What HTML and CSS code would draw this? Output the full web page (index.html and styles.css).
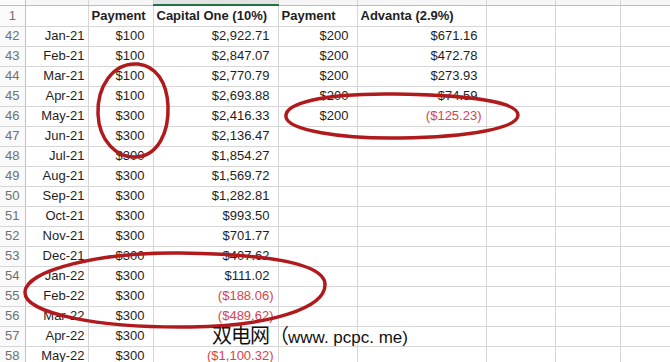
FILE: index.html
```html
<!DOCTYPE html>
<html lang="en">
<head>
  <meta charset="UTF-8" />
  <title>Payoff schedule</title>
  <link rel="stylesheet" href="styles.css">
</head>
<body>
  <div class="sheet">
    <table class="grid">
      <colgroup>
        <col class="c-rn">
        <col class="c-a">
        <col class="c-b">
        <col class="c-c">
        <col class="c-d">
        <col class="c-e">
        <col class="c-f">
        <col class="c-g">
        <col class="c-h">
      </colgroup>
      <tr class="colhead">
        <td class="rn"></td><td></td><td></td><td class="sel"></td><td></td><td></td><td></td><td></td><td></td>
      </tr>
      <tr class="head">
        <td class="rn">1</td><td></td><td>Payment</td><td>Capital One (10%)</td><td>Payment</td><td>Advanta (2.9%)</td><td></td><td></td><td></td>
      </tr>
      <tr><td class="rn">42</td><td class="date">Jan-21</td><td class="num">$100</td><td class="num">$2,922.71</td><td class="num">$200</td><td class="num">$671.16</td><td></td><td></td><td></td></tr>
      <tr><td class="rn">43</td><td class="date">Feb-21</td><td class="num">$100</td><td class="num">$2,847.07</td><td class="num">$200</td><td class="num">$472.78</td><td></td><td></td><td></td></tr>
      <tr><td class="rn">44</td><td class="date">Mar-21</td><td class="num">$100</td><td class="num">$2,770.79</td><td class="num">$200</td><td class="num">$273.93</td><td></td><td></td><td></td></tr>
      <tr><td class="rn">45</td><td class="date">Apr-21</td><td class="num">$100</td><td class="num">$2,693.88</td><td class="num">$200</td><td class="num">$74.59</td><td></td><td></td><td></td></tr>
      <tr><td class="rn">46</td><td class="date">May-21</td><td class="num">$300</td><td class="num">$2,416.33</td><td class="num">$200</td><td class="neg">($125.23)</td><td></td><td></td><td></td></tr>
      <tr><td class="rn">47</td><td class="date">Jun-21</td><td class="num">$300</td><td class="num">$2,136.47</td><td></td><td></td><td></td><td></td><td></td></tr>
      <tr><td class="rn">48</td><td class="date">Jul-21</td><td class="num">$300</td><td class="num">$1,854.27</td><td></td><td></td><td></td><td></td><td></td></tr>
      <tr><td class="rn">49</td><td class="date">Aug-21</td><td class="num">$300</td><td class="num">$1,569.72</td><td></td><td></td><td></td><td></td><td></td></tr>
      <tr><td class="rn">50</td><td class="date">Sep-21</td><td class="num">$300</td><td class="num">$1,282.81</td><td></td><td></td><td></td><td></td><td></td></tr>
      <tr><td class="rn">51</td><td class="date">Oct-21</td><td class="num">$300</td><td class="num">$993.50</td><td></td><td></td><td></td><td></td><td></td></tr>
      <tr><td class="rn">52</td><td class="date">Nov-21</td><td class="num">$300</td><td class="num">$701.77</td><td></td><td></td><td></td><td></td><td></td></tr>
      <tr><td class="rn">53</td><td class="date">Dec-21</td><td class="num">$300</td><td class="num">$407.62</td><td></td><td></td><td></td><td></td><td></td></tr>
      <tr><td class="rn">54</td><td class="date">Jan-22</td><td class="num">$300</td><td class="num">$111.02</td><td></td><td></td><td></td><td></td><td></td></tr>
      <tr><td class="rn">55</td><td class="date">Feb-22</td><td class="num">$300</td><td class="neg">($188.06)</td><td></td><td></td><td></td><td></td><td></td></tr>
      <tr><td class="rn">56</td><td class="date">Mar-22</td><td class="num">$300</td><td class="neg">($489.62)</td><td></td><td></td><td></td><td></td><td></td></tr>
      <tr><td class="rn">57</td><td class="date">Apr-22</td><td class="num">$300</td><td></td><td></td><td></td><td></td><td></td><td></td></tr>
      <tr><td class="rn">58</td><td class="date">May-22</td><td class="num">$300</td><td class="neg">($1,100.32)</td><td></td><td></td><td></td><td></td><td></td></tr>
    </table>

    <!-- hand drawn marks on top of the sheet -->
    <svg class="marks" width="670" height="362" viewBox="0 0 670 362">
      <g fill="none" stroke="#b01a1d" stroke-width="3.5" stroke-linecap="round">
        <path d="M138 64 C112 62 97 88 98 114 C99 140 116 158 136 157 C158 156 169 132 168 106 C167 82 156 66 138 64 Z" />
        <path d="M395 94 C320 93 284 104 286 117 C288 130 340 139 400 138 C470 137 518 128 518 115 C518 102 470 95 395 94 Z" />
        <path d="M180 253 C100 252 26 270 25 292 C24 314 100 328 190 327 C270 326 326 308 325 284 C324 262 260 254 180 253 Z" />
      </g>
    </svg>

    <div class="watermark"><span class="cn">双电网（</span>www. pcpc. me)</div>
  </div>
</body>
</html>
```

FILE: styles.css
```css
* {
  box-sizing: border-box;
}

html, body {
  margin: 0;
  height: 100%;
  overflow: hidden;
  background: #fff;
}

.sheet {
  position: relative;
  width: 670px;
  height: 362px;
  overflow: hidden;
}

.grid {
  border-collapse: collapse;
  table-layout: fixed;
  width: 700px;
  font-family: "Liberation Sans", Arial, sans-serif;
  font-size: 13px;
  color: #1e1e1e;
}

.c-rn { width: 25px; }
.c-a { width: 63px; }
.c-b { width: 65px; }
.c-c { width: 125px; }
.c-d { width: 79px; }
.c-e { width: 129px; }
.c-f { width: 69px; }
.c-g { width: 65px; }
.c-h { width: 80px; }

.grid td {
  border: 1px solid #d6d6d6;
  height: 20px;
  padding: 0 3px;
  white-space: nowrap;
  overflow: hidden;
  line-height: 18px;
}

.grid .colhead td {
  height: 5px;
  line-height: 0;
  background: #f6f6f6;
  border-top: none;
  border-bottom-color: #bdbdbd;
}

.grid .colhead td.sel {
  background: #e2e2e2;
  border-bottom: 2px solid #217346;
}

.grid .head td {
  height: 21px;
  font-weight: bold;
}

.grid td.rn {
  text-align: center;
  color: #707070;
  font-weight: normal;
  background: #fafafa;
  border-left: none;
  border-right-color: #c2c2c2;
  padding: 0;
}

.grid td.date {
  text-align: right;
}

.grid td.num {
  text-align: right;
  padding-right: 8px;
}

.grid td.neg {
  text-align: right;
  padding-right: 4px;
  color: #d8434a;
}

.marks {
  position: absolute;
  left: 0;
  top: 0;
}

.watermark {
  position: absolute;
  left: 212px;
  top: 325px;
  font-family: "Liberation Sans", "Noto Sans CJK SC", sans-serif;
  font-size: 17px;
  color: #111;
  line-height: 20px;
}

.watermark .cn {
  font-family: "Noto Sans CJK SC", sans-serif;
  font-size: 20px;
  line-height: 20px;
  letter-spacing: -1px;
}
```
